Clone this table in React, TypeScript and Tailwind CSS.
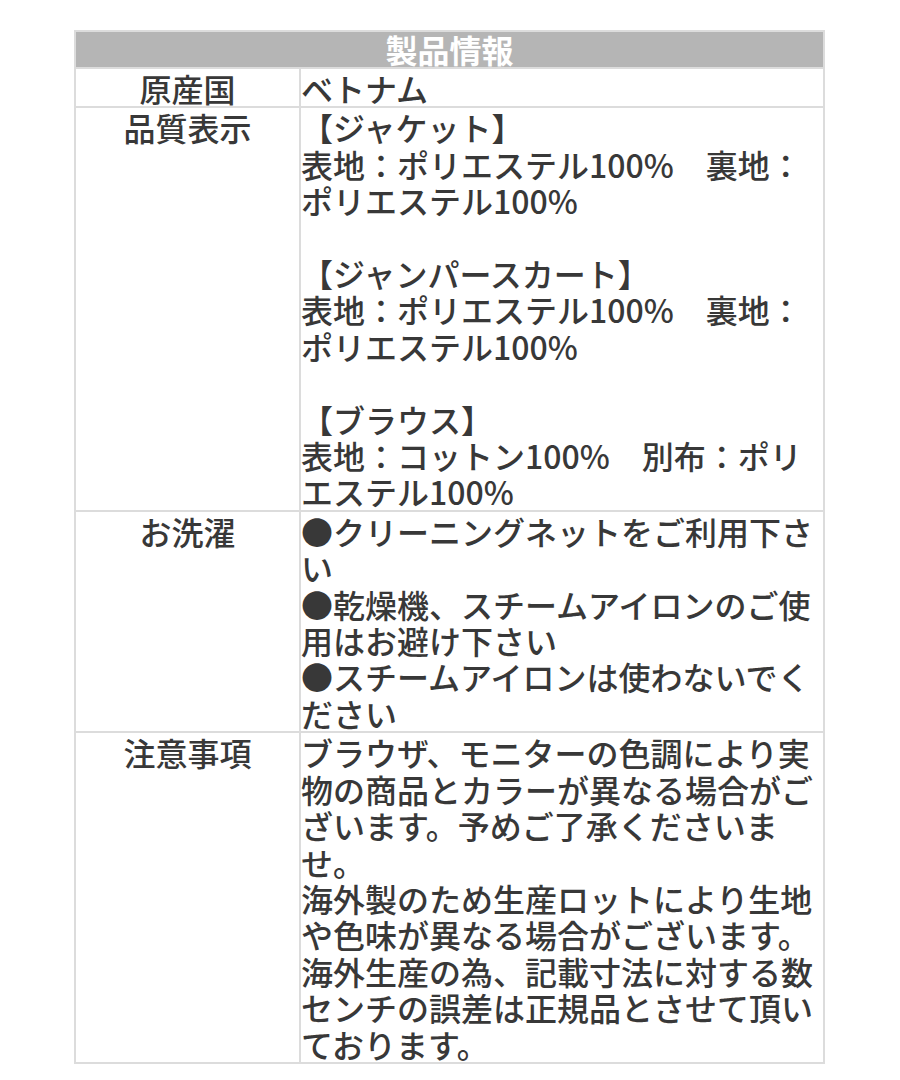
const jp = "font-['Noto_Sans_CJK_JP','Noto_Sans',sans-serif]";

interface Row {
  label: string;
  lines: string[];
}

const rows: Row[] = [
  { label: "原産国", lines: ["ベトナム"] },
  {
    label: "品質表示",
    lines: [
      "【ジャケット】",
      "表地：ポリエステル100%　裏地：ポリエステル100%",
      "",
      "【ジャンパースカート】",
      "表地：ポリエステル100%　裏地：ポリエステル100%",
      "",
      "【ブラウス】",
      "表地：コットン100%　別布：ポリエステル100%",
    ],
  },
  {
    label: "お洗濯",
    lines: [
      "●クリーニングネットをご利用下さい",
      "●乾燥機、スチームアイロンのご使用はお避け下さい",
      "●スチームアイロンは使わないでください",
    ],
  },
  {
    label: "注意事項",
    lines: [
      "ブラウザ、モニターの色調により実物の商品とカラーが異なる場合がございます。予めご了承くださいませ。",
      "海外製のため生産ロットにより生地や色味が異なる場合がございます。",
      "海外生産の為、記載寸法に対する数センチの誤差は正規品とさせて頂いております。",
    ],
  },
];

export default function App() {
  return (
    <div className={`min-h-[1080px] bg-white pt-[30px] ${jp}`}>
      <table className="ml-[74px] w-[751px] table-fixed border-collapse border-2 border-[#dcdcdc] text-[32px] leading-[36.4px] font-medium text-[#383838]">
        <colgroup>
          <col className="w-[225px]" />
          <col />
        </colgroup>
        <thead>
          <tr>
            <th
              colSpan={2}
              className="h-[37px] border-2 border-[#dcdcdc] bg-[#b5b5b5] p-0 text-center font-bold leading-[33px] text-white"
            >
              製品情報
            </th>
          </tr>
        </thead>
        <tbody>
          {rows.map((row) => (
            <tr key={row.label}>
              <td className="border-2 border-[#dcdcdc] px-0 pt-[1px] pb-0 text-center align-top">
                {row.label}
              </td>
              <td className="border-2 border-[#dcdcdc] pt-[1px] pb-0 pl-0 pr-[6px] align-top break-all">
                {row.lines.map((line, i) =>
                  line === "" ? (
                    <div key={i} className="h-[36.4px]" />
                  ) : (
                    <div key={i}>{line}</div>
                  )
                )}
              </td>
            </tr>
          ))}
        </tbody>
      </table>
    </div>
  );
}
